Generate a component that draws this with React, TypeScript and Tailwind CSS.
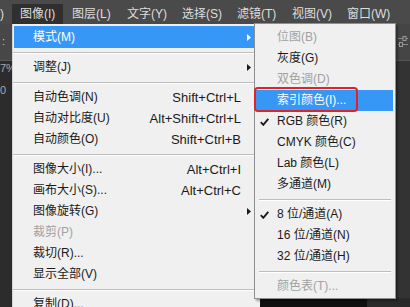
import React from "react";

type Item =
  | { sep: true }
  | {
      sep?: false;
      label: string;
      shortcut?: string;
      sub?: boolean;
      disabled?: boolean;
      active?: boolean;
      checked?: boolean;
    };

const mainItems: Item[] = [
  { label: "模式(M)", sub: true, active: true },
  { sep: true },
  { label: "调整(J)", sub: true },
  { sep: true },
  { label: "自动色调(N)", shortcut: "Shift+Ctrl+L" },
  { label: "自动对比度(U)", shortcut: "Alt+Shift+Ctrl+L" },
  { label: "自动颜色(O)", shortcut: "Shift+Ctrl+B" },
  { sep: true },
  { label: "图像大小(I)...", shortcut: "Alt+Ctrl+I" },
  { label: "画布大小(S)...", shortcut: "Alt+Ctrl+C" },
  { label: "图像旋转(G)", sub: true },
  { label: "裁剪(P)", disabled: true },
  { label: "裁切(R)..." },
  { label: "显示全部(V)" },
  { sep: true },
  { label: "复制(D)..." },
];

const subItems: Item[] = [
  { label: "位图(B)", disabled: true },
  { label: "灰度(G)" },
  { label: "双色调(D)", disabled: true },
  { label: "索引颜色(I)...", active: true },
  { label: "RGB 颜色(R)", checked: true },
  { label: "CMYK 颜色(C)" },
  { label: "Lab 颜色(L)" },
  { label: "多通道(M)" },
  { sep: true },
  { label: "8 位/通道(A)", checked: true },
  { label: "16 位/通道(N)" },
  { label: "32 位/通道(H)" },
  { sep: true },
  { label: "颜色表(T)...", disabled: true },
];

const menuBar = ["图层(L)", "文字(Y)", "选择(S)", "滤镜(T)", "视图(V)", "窗口(W)"];

const Arrow = ({ white }: { white?: boolean }) => (
  <svg width="4" height="7" viewBox="0 0 4 7">
    <polygon points="0,0 4,3.5 0,7" fill={white ? "#ffffff" : "#1a1a1a"} />
  </svg>
);

const Check = () => (
  <svg width="9" height="8" viewBox="0 0 9 8">
    <path d="M0.8 4.2 L3.3 6.8 L8.3 0.8" fill="none" stroke="#1a1a1a" strokeWidth="1.9" />
  </svg>
);

const App = () => {
  return (
    <div
      className="relative h-[307px] w-[410px] overflow-hidden bg-[#2e2e2e] text-[12px]"
      style={{ fontFamily: '"Liberation Sans", "Noto Sans CJK SC", sans-serif' }}
    >
      {/* Menu bar */}
      <div className="flex h-6 bg-[#4a4a4a] text-[#dedede]">
        <div className="w-3 leading-[28px]">)</div>
        <div className="mt-1 h-5 w-[51px] bg-[#303030] pl-2 leading-[20px]">图像(I)</div>
        {menuBar.map((m) => (
          <div key={m} className="w-[55px] shrink-0 whitespace-nowrap pl-[9px] pt-1 leading-[20px]">
            {m}
          </div>
        ))}
      </div>

      <div className="flex h-[283px]">
        {/* left panel strip */}
        <div className="flex w-3 flex-col text-[11px]">
          <div className="h-9 bg-[#474747] pl-[2px] pt-[12px] leading-none text-[#cfcfcf]">:</div>
          <div className="flex-1 border-t border-[#5a5a5a] bg-[#2c2c2c] pt-[2px] leading-[11px] text-[#a8a8a8]">
            <div>7%</div>
            <div className="mt-[11px]">0</div>
          </div>
        </div>

        {/* Image menu */}
        <div className="w-[248px] border-l border-[#d4d4d4] bg-[#f0f0f0] pt-[2px] text-[#1a1a1a]">
          {mainItems.map((it, i) =>
            it.sep ? (
              <div key={i} className="flex h-[9px] items-center">
                <div className="w-full border-t border-[#bdbdbd] border-b border-b-white" />
              </div>
            ) : (
              <div
                key={i}
                className={`mx-px flex items-center pl-[19px] pr-2 ${
                  it.active ? "h-[22px] bg-[#3797f7] text-white" : "h-[21px]"
                } ${it.disabled ? "text-[#a2a2a2]" : ""}`}
              >
                <span className="flex-1 leading-[21px]">{it.label}</span>
                {it.shortcut && <span className="text-[13px] leading-[21px]">{it.shortcut}</span>}
                <span className="flex w-[10px] justify-end">{it.sub && <Arrow white={it.active} />}</span>
              </div>
            )
          )}
        </div>

        {/* right panels */}
        <div className="flex flex-1 flex-col">
          <div className="flex h-9 justify-end bg-[#454545] pr-[2px] pt-[12px]">
            <svg width="10" height="12" viewBox="0 0 10 12">
              <path d="M0 2.5 H10 M0 8.5 H10" stroke="#8a8a8a" strokeWidth="1" />
              <rect x="5" y="0.5" width="3" height="4" fill="#454545" stroke="#9a9a9a" />
              <rect x="1.5" y="6.5" width="3" height="4" fill="#454545" stroke="#9a9a9a" />
            </svg>
          </div>
          <div className="flex-1 border-t border-[#555] bg-[#333333]" />
          <div className="flex h-[9px] bg-[#2a2a2a]">
            <div className="w-[107px] bg-[#101010]" />
          </div>
        </div>
      </div>

      {/* Mode submenu */}
      <div className="absolute left-[254px] top-[23px] w-[142px] border border-[#8f8f8f] bg-[#f0f0f0] pb-[1px] pt-[3px] text-[#1a1a1a] shadow-[2px_2px_2px_rgba(0,0,0,0.35)]">
        {subItems.map((it, i) =>
          it.sep ? (
            <div key={i} className="flex h-[9px] items-center px-1">
              <div className="w-full border-t border-[#bdbdbd] border-b border-b-white" />
            </div>
          ) : (
            <div
              key={i}
              className={`relative mr-[2px] flex h-[21px] items-center pl-[22px] ${
                it.active ? "bg-[#3797f7] text-white" : ""
              } ${it.disabled ? "text-[#a2a2a2]" : ""}`}
            >
              {it.checked && (
                <span className="absolute left-[5px] top-[7px] flex">
                  <Check />
                </span>
              )}
              <span className="leading-[21px]">{it.label}</span>
            </div>
          )
        )}
      </div>

      {/* red annotation box */}
      <div className="absolute left-[254px] top-[87px] h-[25px] w-[104px] rounded-[4px] border-2 border-[#e02424]" />
    </div>
  );
};

export default App;
